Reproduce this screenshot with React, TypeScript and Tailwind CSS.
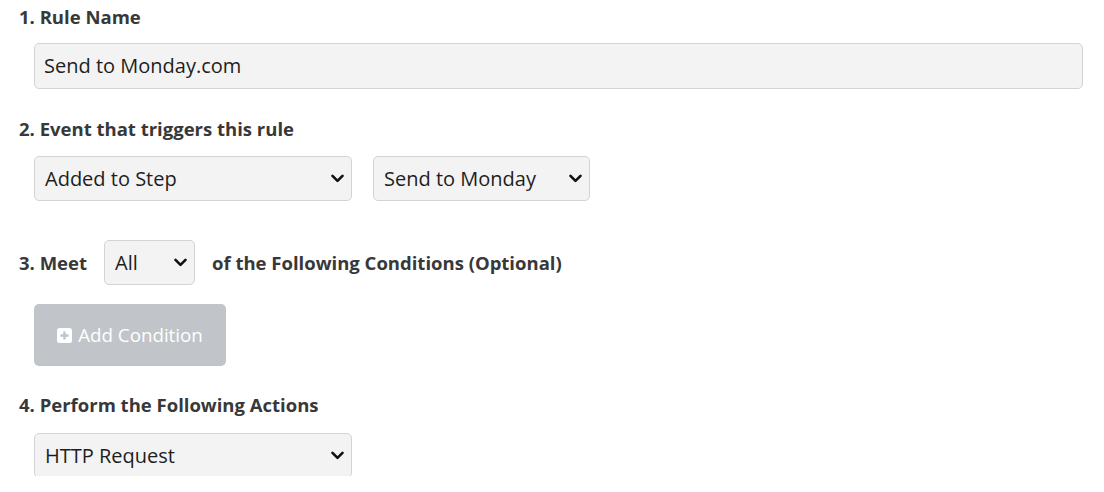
import React from "react";

const Chevron = () => (
  <svg width="13" height="9" viewBox="0 0 13 9" className="shrink-0">
    <path d="M1.5 1.8 L6.5 6.8 L11.5 1.8" fill="none" stroke="#111" strokeWidth="2.6" strokeLinecap="round" strokeLinejoin="round" />
  </svg>
);

function Select({ label, className }: { label: string; className: string }) {
  return (
    <div className={`flex items-center justify-between rounded-[5px] border border-[#d4d4d4] bg-[#f3f3f3] pl-[10px] pr-[7px] text-[20px] font-normal text-[#1e1e1e] ${className}`}>
      <span>{label}</span>
      <Chevron />
    </div>
  );
}

export default function App() {
  return (
    <div className="min-h-[492px] w-[1104px] bg-white pl-[19px] pt-[5px] font-['Open_Sans',sans-serif]">
      <div className="text-[18.5px] font-bold leading-[24px] text-[#383838]">1. Rule Name</div>
      <div className="ml-[15px] mt-[14px] flex h-[46px] w-[1049px] items-center rounded-[5px] border border-[#d4d4d4] bg-[#f3f3f3] pl-[9px] text-[20px] text-[#1e1e1e]">
        Send to Monday.com
      </div>

      <div className="mt-[28px] text-[18.5px] font-bold leading-[24px] text-[#383838]">2. Event that triggers this rule</div>
      <div className="ml-[15px] mt-[15px] flex gap-[21px]">
        <Select label="Added to Step" className="h-[45px] w-[318px]" />
        <Select label="Send to Monday" className="h-[45px] w-[217px]" />
      </div>

      <div className="mt-[39px] flex h-[45px] items-center text-[18.5px] font-bold text-[#383838]">
        <span>3. Meet</span>
        <Select label="All" className="ml-[17px] h-[45px] w-[91px]" />
        <span className="ml-[17px]">of the Following Conditions (Optional)</span>
      </div>

      <button className="ml-[15px] mt-[19px] flex h-[62px] w-[192px] items-center justify-center gap-[6px] rounded-[5px] bg-[#c1c5c9] text-[18.75px] text-white">
        <svg width="15" height="15" viewBox="0 0 15 15">
          <rect x="0" y="0" width="15" height="15" rx="2.5" fill="#fff" />
          <path d="M7.5 3.5 V11.5 M3.5 7.5 H11.5" stroke="#c1c5c9" strokeWidth="2.4" />
        </svg>
        <span>Add Condition</span>
      </button>

      <div className="mt-[27px] text-[18.5px] font-bold leading-[24px] text-[#383838]">4. Perform the Following Actions</div>
      <div className="ml-[15px] mt-[16px] h-[43px] w-[318px] overflow-hidden">
        <Select label="HTTP Request" className="h-[45px] w-[318px]" />
      </div>
    </div>
  );
}
